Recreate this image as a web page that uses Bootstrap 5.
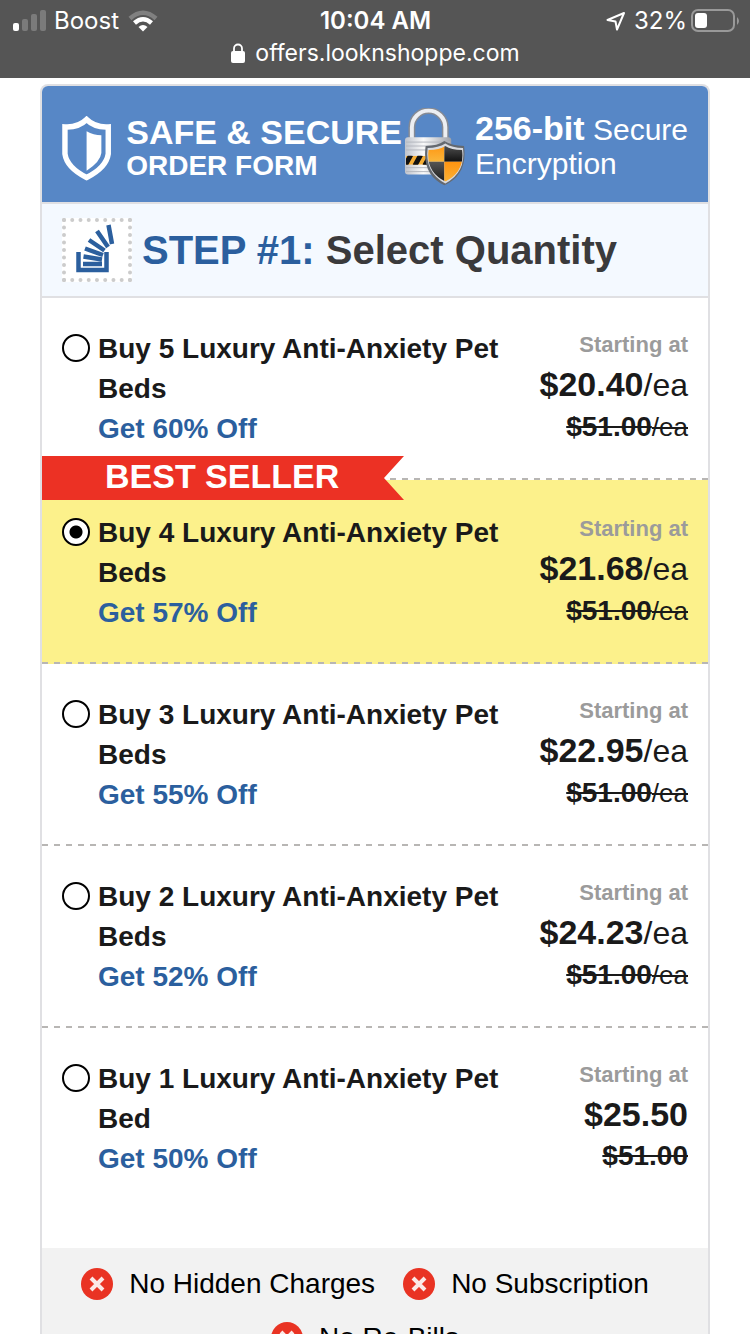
<!DOCTYPE html>
<html lang="en">
<head>
<meta charset="utf-8">
<meta name="viewport" content="width=device-width, initial-scale=1">
<title>Secure Order Form</title>
<link rel="stylesheet" href="https://cdn.jsdelivr.net/npm/bootstrap@5.3.0/dist/css/bootstrap.min.css">
<style>
  body { font-family: "Liberation Sans", Arial, sans-serif; color: #1a1a1a; background: #fff; }
  .phone-bar { background: #555; color: #fff; font-family: Inter, sans-serif; font-size: 24px; line-height: 32px; padding: 5px 11px 9px 12px; }
  .phone-bar .side { flex: 1 1 0; }
  .clock { font-weight: 600; }
  .address { font-size: 23px; gap: 10px; }
  .order { margin: 6px 40px 0; border: 2px solid #e0e0e3; border-bottom: 0; border-radius: 8px 8px 0 0; }
  .banner { background: #5787c6; color: #fff; border-bottom: 2px solid #e0e0e3; border-radius: 6px 6px 0 0; padding: 22px 20px 16px; }
  .big { font-size: 34px; line-height: 36px; }
  .mid { font-size: 30px; line-height: 34px; padding-top: 2px; }
  .sub { font-size: 28px; line-height: 32px; }
  .banner-form { margin-left: 15px; padding-top: 6px; }
  .banner-lock { margin: 0 9px 0 2px; }
  .step { background: #f4f9ff; border-bottom: 2px solid #e0e0e3; padding: 14px 20px; }
  .step h1 { font-size: 40px; line-height: 64px; font-weight: 700; color: #3a3a3c; }
  .blue { color: #2b5f9e; }
  .step-icon { border: 4px dotted #ccc; background: #fff; width: 70px; height: 64px; margin-right: 10px; }
  .offer { padding: 31px 20px; font-size: 28px; background: repeating-linear-gradient(90deg, #b8b6b4 0 6px, transparent 6px 12px) bottom / 100% 2px no-repeat; }
  .offer-best { background-color: #fcf18b; padding-top: 33px; }
  .offer:last-of-type { background: none; padding-bottom: 69px; }
  .offer label { line-height: 40px; }
  .pick { appearance: none; flex: none; width: 28px; height: 28px; margin: 5px 8px 0 0; border: 2px solid #000; border-radius: 50%; background: #fff; }
  .pick:checked { background: radial-gradient(circle, #000 0 6px, #fff 7px); }
  .cost { min-width: 152px; line-height: 38px; }
  .cost .from { font-size: 22px; line-height: 32px; color: #9b9b9b; }
  .cost .now { font-size: 34px; line-height: 46px; }
  .now .unit { font-size: 32px; }
  .was .unit { font-size: 26px; }
  .ribbon { top: -24px; left: 0; width: 362px; height: 44px; padding-left: 63px; background: #ec3124; color: #fff; font-size: 34px; line-height: 40px; clip-path: polygon(0 0, 100% 0, 342px 50%, 100% 100%, 0 100%); }
  .promises { background: #f2f2f2; color: #000; font-size: 28px; line-height: 54px; padding: 9px 20px 24px 0; column-gap: 28px; }
  .promises li { gap: 16px; }
</style>
</head>
<body>
<div class="vh-100 overflow-hidden">
<header class="phone-bar">
  <div class="d-flex align-items-center">
    <div class="side d-flex align-items-center">
      <svg width="34" height="22" viewBox="0 0 34 22" aria-hidden="true"><rect x="1" y="13" width="6" height="8" rx="2" fill="#fff"/><g fill="#7b7b7b"><rect x="10" y="9" width="6" height="12" rx="2"/><rect x="19" y="4" width="6" height="17" rx="2"/><rect x="28" y="0" width="6" height="21" rx="2"/></g></svg>
      <span class="ms-2">Boost</span>
      <svg class="ms-2" width="32" height="24" viewBox="0 0 32 24" fill="none" aria-hidden="true"><path d="M3 9.500Q16-2 29 9.500" stroke="#808080" stroke-width="4.500"/><path d="M7.500 14Q16 6.500 24.500 14" stroke="#fff" stroke-width="4.500"/><path d="M11.500 18Q16 14 20.500 18L16 22.500Z" fill="#fff"/></svg>
    </div>
    <div class="clock">10:04 AM</div>
    <div class="side d-flex align-items-center justify-content-end">
      <svg class="me-2" width="20" height="20" viewBox="0 0 20 20" fill="none" stroke="#fff" stroke-width="2" stroke-linejoin="round" aria-hidden="true"><path d="M1.500 9 18 2 11 18.500 9.500 10.500Z"/></svg>
      <span>32%</span>
      <svg class="ms-1" width="48" height="24" viewBox="0 0 48 24" aria-hidden="true"><rect x="1" y="1" width="42" height="21" rx="6" fill="none" stroke="#999" stroke-width="2"/><rect x="4" y="4" width="12" height="15" rx="3" fill="#fff"/><path d="M46 8q4 4 0 8Z" fill="#999"/></svg>
    </div>
  </div>
  <div class="address d-flex align-items-center justify-content-center">
    <svg width="14" height="20" viewBox="0 0 14 20" aria-hidden="true"><rect y="8" width="14" height="12" rx="2" fill="#fff"/><path d="M3 9V5.500a4 4 0 0 1 8 0V9" fill="none" stroke="#fff" stroke-width="1.800"/></svg>
    <span>offers.looknshoppe.com</span>
  </div>
</header>

<main class="order">
  <div class="banner d-flex align-items-start text-nowrap">
    <svg class="mt-2" width="50" height="66" viewBox="0 0 50 66" aria-hidden="true"><path d="M25 3C19 9 12 11 3 10.500V38Q5 52 25 62Q45 52 47 38V10.500C38 11 31 9 25 3Z" fill="none" stroke="#fff" stroke-width="5.500"/><path d="M25 15Q32 19 40 19V37Q39 46 25 55Z" fill="#fff"/></svg>
    <div class="banner-form fw-bold"><div class="big">SAFE &amp; SECURE</div><div class="sub">ORDER FORM</div></div>
    <svg class="banner-lock" width="63" height="78" viewBox="0 0 63 78" aria-hidden="true">
      <defs>
        <linearGradient id="steel"><stop offset="0" stop-color="#bfc3cc"/><stop offset=".4" stop-color="#fafafa"/><stop offset="1" stop-color="#9da1aa"/></linearGradient>
        <linearGradient id="gold" x2="0" y2="1"><stop offset="0" stop-color="#ff9410"/><stop offset="1" stop-color="#f9b63b"/></linearGradient>
        <linearGradient id="coal" x2="0" y2="1"><stop offset="0" stop-color="#555"/><stop offset="1" stop-color="#111"/></linearGradient>
        <clipPath id="crest"><path d="M42 38Q48 42 59 42Q62 64 42 74Q22 64 25 42Q36 42 42 38Z"/></clipPath>
        <clipPath id="tape"><rect x="2" y="48" width="24" height="9"/></clipPath>
      </defs>
      <path d="M8 33V19a17 17 0 0 1 34 0V33" fill="none" stroke="#858a94" stroke-width="7"/>
      <path d="M8 33V19a17 17 0 0 1 34 0V33" fill="none" stroke="#eceef2" stroke-width="4"/>
      <rect x="1" y="29" width="47" height="38" rx="3" fill="url(#steel)"/>
      <path d="M2 34H47M2 38H47M2 42H47M2 60H30M2 64H30" stroke="#b4b7be" stroke-width="1"/>
      <g clip-path="url(#tape)"><rect x="2" y="48" width="24" height="9" fill="#f7ae35"/><path d="M1 58 7 47M11 58 17 47M21 58 27 47" stroke="#111" stroke-width="5"/></g>
      <path d="M41 33Q49 38 61 38Q65 67 41 78Q18 67 22 38Q34 38 41 33Z" fill="#646970"/>
      <path d="M42 35.500Q49 40 60 40Q63 65 42 76Q21 65 24 40Q35 40 42 35.500Z" fill="#d8dadf"/>
      <g clip-path="url(#crest)"><rect x="20" y="36" width="21" height="18" fill="url(#gold)"/><rect x="41" y="36" width="22" height="18" fill="url(#coal)"/><rect x="20" y="54" width="21" height="24" fill="url(#coal)"/><rect x="41" y="54" width="22" height="24" fill="url(#gold)"/></g>
    </svg>
    <div class="mid"><div><b class="big">256-bit</b> Secure</div><div>Encryption</div></div>
  </div>

  <div class="step d-flex align-items-center">
    <svg class="step-icon" viewBox="0 0 62 56" fill="none" stroke="#2b5f9e" stroke-width="4.500" aria-hidden="true"><path d="M12.500 30V48H40.500V30" /><path d="M17 42H36M17.500 34.500 36 37.500M19 26.500 37 33M23 18 38.500 28.500M31 9 42 25M42.500 3 46 22"/></svg>
    <h1 class="mb-0 text-nowrap"><span class="blue">STEP #1:</span> Select Quantity</h1>
  </div>

  <form>
    <section class="offer d-flex align-items-start">
      <input class="pick" type="radio" name="qty" id="q5">
      <label class="flex-fill fw-bold" for="q5">Buy 5 Luxury Anti-Anxiety Pet Beds<span class="blue d-block">Get 60% Off</span></label>
      <div class="cost text-end text-nowrap"><div class="from fw-bold">Starting at</div><div class="now"><b>$20.40</b><span class="unit">/ea</span></div><s class="was d-block"><b>$51.00</b><span class="unit">/ea</span></s></div>
    </section>
    <section class="offer offer-best d-flex align-items-start position-relative">
      <div class="ribbon position-absolute fw-bold text-nowrap">BEST SELLER</div>
      <input class="pick" type="radio" name="qty" id="q4" checked>
      <label class="flex-fill fw-bold" for="q4">Buy 4 Luxury Anti-Anxiety Pet Beds<span class="blue d-block">Get 57% Off</span></label>
      <div class="cost text-end text-nowrap"><div class="from fw-bold">Starting at</div><div class="now"><b>$21.68</b><span class="unit">/ea</span></div><s class="was d-block"><b>$51.00</b><span class="unit">/ea</span></s></div>
    </section>
    <section class="offer d-flex align-items-start">
      <input class="pick" type="radio" name="qty" id="q3">
      <label class="flex-fill fw-bold" for="q3">Buy 3 Luxury Anti-Anxiety Pet Beds<span class="blue d-block">Get 55% Off</span></label>
      <div class="cost text-end text-nowrap"><div class="from fw-bold">Starting at</div><div class="now"><b>$22.95</b><span class="unit">/ea</span></div><s class="was d-block"><b>$51.00</b><span class="unit">/ea</span></s></div>
    </section>
    <section class="offer d-flex align-items-start">
      <input class="pick" type="radio" name="qty" id="q2">
      <label class="flex-fill fw-bold" for="q2">Buy 2 Luxury Anti-Anxiety Pet Beds<span class="blue d-block">Get 52% Off</span></label>
      <div class="cost text-end text-nowrap"><div class="from fw-bold">Starting at</div><div class="now"><b>$24.23</b><span class="unit">/ea</span></div><s class="was d-block"><b>$51.00</b><span class="unit">/ea</span></s></div>
    </section>
    <section class="offer d-flex align-items-start">
      <input class="pick" type="radio" name="qty" id="q1">
      <label class="flex-fill fw-bold" for="q1">Buy 1 Luxury Anti-Anxiety Pet Bed<span class="blue d-block">Get 50% Off</span></label>
      <div class="cost text-end text-nowrap"><div class="from fw-bold">Starting at</div><div class="now"><b>$25.50</b></div><s class="was d-block"><b>$51.00</b></s></div>
    </section>
  </form>

  <svg class="d-none" aria-hidden="true"><symbol id="cross" viewBox="0 0 32 32"><circle cx="16" cy="16" r="16" fill="#e93323"/><path d="M10 10 22 22M22 10 10 22" stroke="#fbe9e7" stroke-width="4"/></symbol></svg>
  <ul class="promises list-unstyled d-flex flex-wrap justify-content-center mb-0">
    <li class="d-flex align-items-center"><svg width="32" height="32" aria-hidden="true"><use href="#cross"/></svg>No Hidden Charges</li>
    <li class="d-flex align-items-center"><svg width="32" height="32" aria-hidden="true"><use href="#cross"/></svg>No Subscription</li>
    <li class="d-flex align-items-center"><svg width="32" height="32" aria-hidden="true"><use href="#cross"/></svg>No Re-Bills</li>
  </ul>
</main>
</div>
<script src="https://cdn.jsdelivr.net/npm/bootstrap@5.3.0/dist/js/bootstrap.bundle.min.js"></script>
</body>
</html>
